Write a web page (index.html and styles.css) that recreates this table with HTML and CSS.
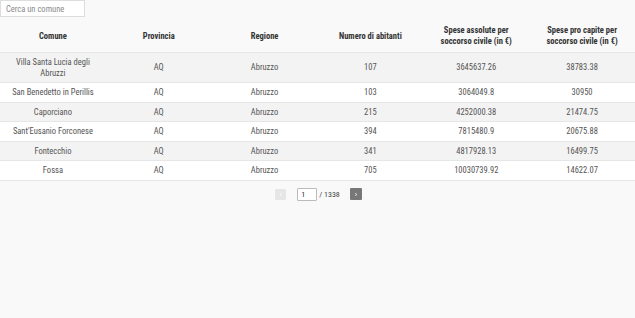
FILE: index.html
```html
<!DOCTYPE html>
<html lang="it">
<head>
    <meta charset="UTF-8">
    <title>Soccorso civile</title>
    <link rel="stylesheet" href="styles.css">
</head>
<body>
    <div class="search">
        <input type="text" placeholder="Cerca un comune">
    </div>
    <table class="comuni">
        <thead>
            <tr>
                <th>Comune</th>
                <th>Provincia</th>
                <th>Regione</th>
                <th>Numero di abitanti</th>
                <th>Spese assolute per soccorso civile (in €)</th>
                <th>Spese pro capite per soccorso civile (in €)</th>
            </tr>
        </thead>
        <tbody>
            <tr><td>Villa Santa Lucia degli Abruzzi</td><td>AQ</td><td>Abruzzo</td><td>107</td><td>3645637.26</td><td>38783.38</td></tr>
            <tr><td>San Benedetto in Perillis</td><td>AQ</td><td>Abruzzo</td><td>103</td><td>3064049.8</td><td>30950</td></tr>
            <tr><td>Caporciano</td><td>AQ</td><td>Abruzzo</td><td>215</td><td>4252000.38</td><td>21474.75</td></tr>
            <tr><td>Sant'Eusanio Forconese</td><td>AQ</td><td>Abruzzo</td><td>394</td><td>7815480.9</td><td>20675.88</td></tr>
            <tr><td>Fontecchio</td><td>AQ</td><td>Abruzzo</td><td>341</td><td>4817928.13</td><td>16499.75</td></tr>
            <tr><td>Fossa</td><td>AQ</td><td>Abruzzo</td><td>705</td><td>10030739.92</td><td>14622.07</td></tr>
        </tbody>
    </table>
    <div class="pager">
        <button class="page-btn" disabled>‹</button>
        <input class="page-input" type="text" value="1">
        <span class="page-total">/ 1338</span>
        <button class="page-btn active">›</button>
    </div>
</body>
</html>
```

FILE: styles.css
```css
body {
    margin: 0;
    background: #f9f9f9;
    font-family: 'Roboto', sans-serif;
    font-stretch: condensed;
    color: #333;
    font-size: 8.5px;
}
.search input {
    width: 85px;
    height: 17px;
    box-sizing: border-box;
    border: 1px solid #ddd;
    background: #fff;
    padding: 0 5px;
    font-family: inherit;
    font-stretch: condensed;
    font-size: 8.5px;
    margin: 0;
}
.search input::placeholder {
    color: #8a8a8a;
}
.comuni {
    width: 100%;
    border-collapse: collapse;
    table-layout: fixed;
    margin-top: 3px;
}
.comuni th {
    font-weight: 700;
    font-size: 8.5px;
    line-height: 11px;
    height: 32px;
    padding: 0 8px;
    text-align: center;
    color: #333;
    border-bottom: 1px solid #e6e6e6;
}
.comuni td {
    text-align: center;
    padding: 4px 8px;
    line-height: 10.5px;
    border-bottom: 1px solid #e6e6e6;
    color: #555;
}
.comuni tbody tr:nth-child(odd) {
    background: #f3f3f3;
}
.comuni tbody tr:nth-child(even) {
    background: #fff;
}
.pager {
    display: flex;
    justify-content: center;
    align-items: center;
    margin-top: 7px;
    padding-left: 2px;
}
.page-btn {
    width: 11px;
    height: 11px;
    padding: 0;
    border: none;
    border-radius: 1px;
    font-size: 7px;
    line-height: 11px;
    color: #fff;
    background: #e6e6e6;
}
.page-btn.active {
    width: 12px;
    height: 12px;
    background: #777;
}
.page-input {
    width: 20px;
    height: 13px;
    box-sizing: border-box;
    border: 1px solid #bbb;
    border-radius: 1px;
    padding: 0 3px;
    font-family: inherit;
    font-stretch: condensed;
    font-size: 8px;
    color: #333;
    margin: 0 2px 0 11px;
}
.page-total {
    font-size: 8px;
    color: #444;
    margin-right: 10px;
}
```
